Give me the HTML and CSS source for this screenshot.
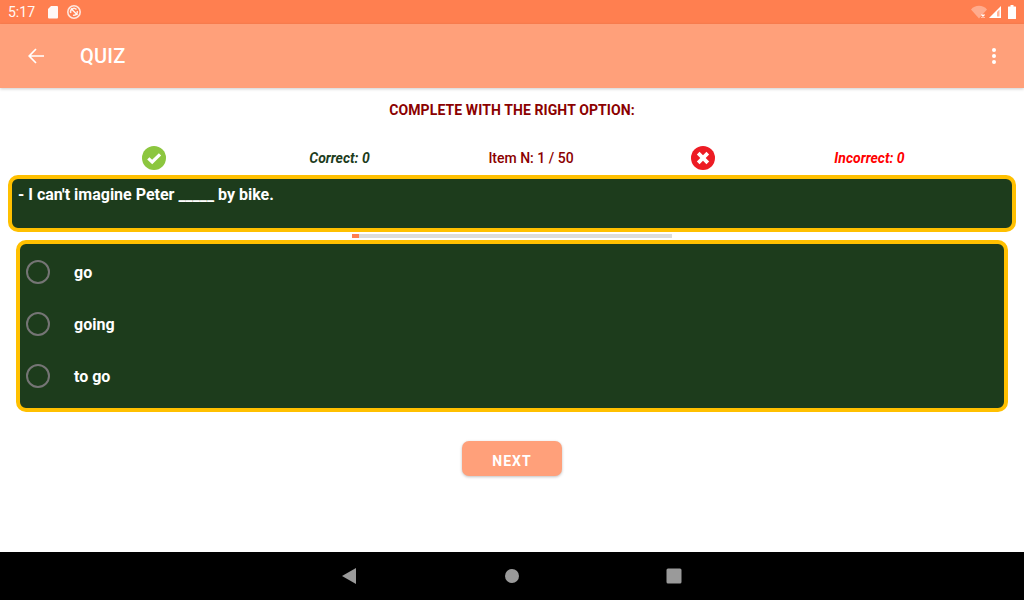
FILE: index.html
```html
<!DOCTYPE html>
<html lang="en">
<head>
    <meta charset="UTF-8">
    <meta name="viewport" content="width=device-width, initial-scale=1.0">
    <title>Quiz</title>
    <link rel="stylesheet" href="styles.css">
</head>
<body>
    <div class="status-bar">
        <div class="status-left">
            <span class="clock">5:17</span>
            <svg class="sd-icon" width="12" height="14" viewBox="0 0 12 14"><path d="M4 1H10a1 1 0 0 1 1 1v10.500a1 1 0 0 1-1 1H2a1 1 0 0 1-1-1V4Z" fill="#fff" opacity="0.95"/></svg>
            <svg class="sync-icon" width="16" height="16" viewBox="0 0 16 16" fill="none" stroke="#fff"><circle cx="8" cy="8" r="6.200" stroke-width="1.600" opacity="0.8"/><path d="M4.800 9A3.400 3.400 0 0 1 10.500 5.500M11.200 7A3.400 3.400 0 0 1 7 11.200" stroke-width="1.500" opacity="0.85"/><path d="M5 4.500 11.500 11" stroke-width="1.500" opacity="0.9"/></svg>
        </div>
        <div class="status-right">
            <svg width="16" height="14" viewBox="0 0 16 14"><path d="M0 4.500C4-.5 12-.5 16 4.500L8 13.500Z" fill="#fff" opacity="0.35"/><path d="M10.500 9.500l3 3m0-3l-3 3" stroke="#fff" stroke-width="1.300"/></svg>
            <svg class="signal-icon" width="14" height="14" viewBox="0 0 14 14"><path d="M13 1V13H1Z" fill="#fff"/><path d="M9 7V11.500H11.500V4.500Z" fill="#ff7f50" opacity="0.6"/></svg>
            <svg class="battery-icon" width="8" height="14" viewBox="0 0 8 14"><path d="M2.500 0H5.500V1.500H7.500A.5.500 0 0 1 8 2V13.500A.5.500 0 0 1 7.500 14H.5A.5.500 0 0 1 0 13.500V2A.5.500 0 0 1 .5 1.500H2.500Z" fill="#fff"/></svg>
        </div>
    </div>

    <header class="app-bar">
        <svg class="back-icon" width="16" height="16" viewBox="0 0 16 16" fill="none" stroke="#fff" stroke-width="1.700"><path d="M16 8H1.500M8 1 1.200 8 8 15"/></svg>
        <h1 class="app-title">QUIZ</h1>
        <div class="more-menu">
            <span class="dot"></span>
            <span class="dot"></span>
            <span class="dot"></span>
        </div>
    </header>

    <main class="content">
        <h2 class="prompt">COMPLETE WITH THE RIGHT OPTION:</h2>

        <div class="score-row">
            <div class="score-cell">
                <svg width="24" height="24" viewBox="0 0 24 24"><circle cx="12" cy="12" r="12" fill="#8cc63f"/><path d="M6.300 12.300 10.200 16 18 8.400" fill="none" stroke="#fff" stroke-width="3.200"/></svg>
            </div>
            <div class="score-cell score-correct">Correct: 0</div>
            <div class="score-cell score-item">Item N: 1 / 50</div>
            <div class="score-cell">
                <svg width="24" height="24" viewBox="0 0 24 24"><circle cx="12" cy="12" r="12" fill="#ed1c24"/><path d="M7.200 7.200 16.800 16.800M16.800 7.200 7.200 16.800" fill="none" stroke="#fff" stroke-width="3.800"/></svg>
            </div>
            <div class="score-cell score-incorrect">Incorrect: 0</div>
        </div>

        <div class="question-box">- I can't imagine Peter _____ by bike.</div>

        <div class="progress"><div class="progress-fill" style="width: 2%"></div></div>

        <div class="options-box">
            <label class="option"><span class="radio"></span><span class="option-text">go</span></label>
            <label class="option"><span class="radio"></span><span class="option-text">going</span></label>
            <label class="option"><span class="radio"></span><span class="option-text">to go</span></label>
        </div>

        <button type="button" class="btn-next">NEXT</button>
    </main>

    <nav class="nav-bar">
        <svg width="16" height="18" viewBox="0 0 16 18"><path d="M15 1V17L1 9Z" fill="#9a9a9a"/></svg>
        <svg width="16" height="16" viewBox="0 0 16 16"><circle cx="8" cy="8" r="7" fill="#9a9a9a"/></svg>
        <svg class="nav-recent" width="16" height="16" viewBox="0 0 16 16"><rect x=".5" y=".5" width="15" height="15" rx="1.500" fill="#9a9a9a"/></svg>
    </nav>
</body>
</html>
```

FILE: styles.css
```css
* {
    box-sizing: border-box;
}

body {
    font-family: Roboto, "Liberation Sans", sans-serif;
    background-color: #ffffff;
    margin: 0;
    width: 1024px;
    height: 600px;
    overflow: hidden;
    display: flex;
    flex-direction: column;
}

.status-bar {
    height: 24px;
    background-color: #ff7f50;
    color: #fff;
    display: flex;
    align-items: center;
    justify-content: space-between;
    padding: 0 8px;
}

.status-left,
.status-right {
    display: flex;
    align-items: center;
}

.clock {
    font-size: 14px;
    width: 39px;
    opacity: 0.95;
}

.sync-icon {
    margin-left: 7px;
}

.signal-icon {
    margin-left: 1px;
}

.battery-icon {
    margin-left: 6px;
}

.app-bar {
    height: 64px;
    background-color: #ffa07a;
    display: flex;
    align-items: center;
    padding: 0 28px;
    box-shadow: 0px 1px 3px rgba(0, 0, 0, 0.2);
    position: relative;
}

.app-title {
    margin: 0 0 0 36px;
    color: #fff;
    font-size: 20px;
    font-weight: 500;
    letter-spacing: 0.2px;
    flex: 1;
}

.more-menu {
    display: flex;
    flex-direction: column;
    gap: 2px;
}

.dot {
    width: 4px;
    height: 4px;
    border-radius: 50%;
    background-color: #fff;
}

.content {
    flex: 1;
    display: flex;
    flex-direction: column;
    align-items: center;
    padding: 0 8px;
}

.prompt {
    margin: 14px 0 0;
    height: 16px;
    line-height: 16px;
    color: #8b0000;
    font-size: 14px;
    font-weight: 700;
    letter-spacing: 0.1px;
}

.score-row {
    margin-top: 28px;
    width: 904px;
    display: grid;
    grid-template-columns: 188px 183px 200px 144px 189px;
    height: 24px;
    font-size: 14px;
    font-weight: 700;
}

.score-cell {
    display: flex;
    align-items: center;
    justify-content: center;
}

.score-correct {
    color: #1d3c1c;
    font-style: italic;
}

.score-item {
    color: #8b0000;
    font-weight: 500;
}

.score-incorrect {
    color: #ff0000;
    font-style: italic;
}

.question-box {
    width: 100%;
    height: 57px;
    margin-top: 5px;
    padding: 7px 6px;
    background-color: #1d3c1c;
    border: 4px solid #ffc000;
    border-radius: 10px;
    color: #fff;
    font-size: 16px;
    font-weight: 700;
    line-height: 18px;
}

.progress {
    width: 320px;
    height: 4px;
    margin-top: 2px;
    background-color: #dcdcdc;
}

.progress-fill {
    height: 100%;
    background-color: #ff7f50;
    min-width: 7px;
}

.options-box {
    width: 992px;
    height: 172px;
    margin-top: 2px;
    padding: 2px 6px;
    background-color: #1d3c1c;
    border: 4px solid #ffc000;
    border-radius: 10px;
}

.option {
    display: flex;
    align-items: center;
    height: 52px;
    color: #fff;
    font-size: 16px;
    font-weight: 700;
}

.radio {
    width: 24px;
    height: 24px;
    margin-right: 24px;
    border: 2px solid #757575;
    border-radius: 50%;
}

.btn-next {
    width: 100px;
    height: 35px;
    margin-top: 29px;
    padding-top: 5px;
    background-color: #ffa07a;
    color: #fff;
    border: none;
    border-radius: 7px;
    font-family: inherit;
    font-size: 14px;
    font-weight: 700;
    letter-spacing: 1px;
    box-shadow: 0px 1px 3px rgba(0, 0, 0, 0.25);
}

.nav-bar {
    height: 48px;
    padding-right: 2px;
    background-color: #000;
    display: flex;
    align-items: center;
    justify-content: center;
    gap: 147px;
}

.nav-recent {
    margin-left: -1px;
}
```
